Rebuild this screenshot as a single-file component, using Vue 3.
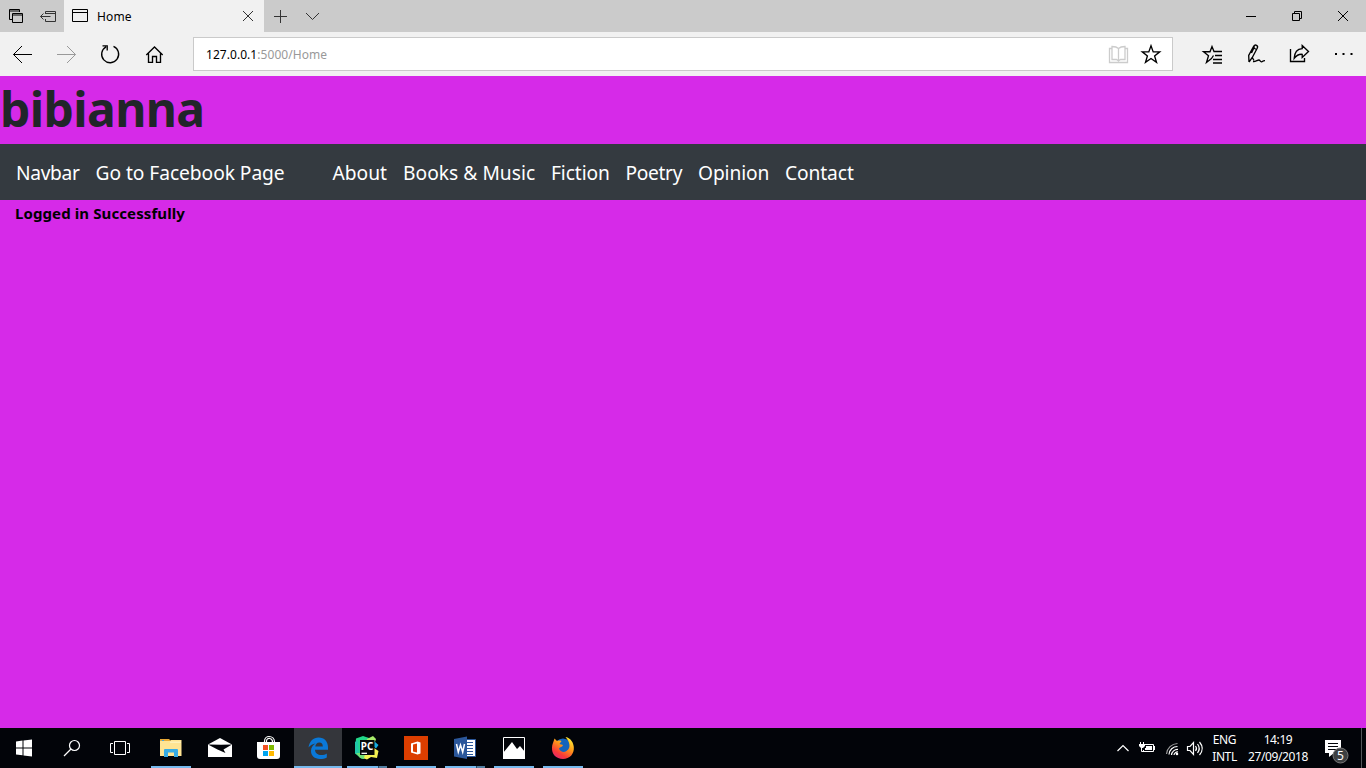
<script setup>
const links = [
  { label: 'Navbar', w: 79.5, s: -0.35 },
  { label: 'Go to Facebook Page', w: 237, s: -0.05 },
  { label: 'About', w: 70.5, s: 0 },
  { label: 'Books & Music', w: 148, s: 0.03 },
  { label: 'Fiction', w: 74.5, s: -0.1 },
  { label: 'Poetry', w: 72.5, s: -0.35 },
  { label: 'Opinion', w: 87, s: -0.1 },
  { label: 'Contact', w: 80, s: -0.1 }
]
</script>

<template>
  <div class="screen">
    <div class="tabs">
      <svg class="c32" viewBox="0 0 32 32"><path class="k" d="M9.5 19.500V9.500H19.500V12M9 11H20M12.500 22.500V13.500H22.500V22.500ZM12 15H23M9.500 19.500H12" /></svg>
      <svg class="c32" viewBox="32 0 32 32"><path class="k dim" d="M45.500 14V11.500H55.500V21.500H45.500V19M45 13.500H56M40.500 16.500H50.500M43.500 13.500L40.500 16.500L43.500 19.500" /></svg>
      <div class="tab">
        <svg class="c32" viewBox="64 0 32 32"><path class="k" d="M72.500 9.500H87.500V21.500H72.500ZM72 12.500H88" /></svg>
        <span class="tabname">Home</span>
        <svg class="c32" viewBox="232 0 32 32"><path class="k dim" d="M243 11L253 21M253 11L243 21" /></svg>
      </div>
      <svg class="c32" viewBox="264 0 32 32"><path class="k dim" d="M274 16.500H287M280.500 10V23" /></svg>
      <svg class="c32" viewBox="296 0 32 32"><path class="k dim" d="M306 13L312.500 19.500L319 13" /></svg>
      <div class="grow"></div>
      <svg class="c46" viewBox="1228 0 46 32"><path class="k" d="M1246 16.500H1256" /></svg>
      <svg class="c46" viewBox="1274 0 46 32"><path class="k" d="M1292.500 13.500H1299.500V20.500H1292.500ZM1294.500 13.500V11.500H1301.500V18.500H1299.500" /></svg>
      <svg class="c46" viewBox="1320 0 46 32"><path class="k" d="M1338 11L1348 21M1348 11L1338 21" /></svg>
    </div>

    <div class="tools">
      <svg class="c44" viewBox="0 32 44 44"><path class="k" d="M32 54.500H13.500M22 46L13.500 54.500L22 63" /></svg>
      <svg class="c44" viewBox="44 32 44 44"><path class="k pale" d="M57 54.500H75.500M67 46L75.500 54.500L67 63" /></svg>
      <svg class="c44" viewBox="88 32 44 44"><path class="k thick" d="M106 46.800A8.500 8.500 0 1 0 113.500 46.400M102.500 45.800H107.200V50.500" /></svg>
      <svg class="c44" viewBox="132 32 44 44"><path class="k thick" d="M146.300 55L154.500 47L162.700 55M148.500 53.500V62.400H152.500V56.500H156.500V62.400H160.500V53.500" /></svg>
      <div class="address">
        <span class="url">127.0.0.1<i>:5000/Home</i></span>
        <svg class="c32" viewBox="1103 38 32 32"><path class="book" d="M1118.500 61V48.500C1116.500 46.500 1113.500 46.500 1112 46.500V59.500H1116.500L1118.500 61L1120.500 59.500H1125V46.500C1122.500 46.500 1120.500 46.500 1118.500 48.500M1112 48.500H1109.500V62.500H1127.500V48.500H1125" /></svg>
        <svg class="c32" viewBox="1135 38 32 32"><path class="k thick" d="M1151 45.800L1153.200 51.900H1159.700L1154.600 56L1156.500 62.400L1151 58.500L1145.500 62.400L1147.400 56L1142.300 51.900H1148.800Z" /></svg>
      </div>
      <svg class="c44" viewBox="1190 32 44 44"><path class="k thick" d="M1222 51.500H1214L1212 46.500L1210 51.700H1203.500L1208.500 55.700L1206.500 62.500L1211.500 58.500M1215 55.500H1222M1213 59.500H1222M1213 63H1222M1211.500 58.500L1213.500 55.500" /></svg>
      <svg class="c44" viewBox="1234 32 44 44"><path class="k thick" d="M1249 62L1248.700 55.500L1253.800 46.200C1255.200 43.800 1258.600 45.600 1257.200 48.200L1252.300 57.500L1249 62M1252.300 57.500L1254 60.500M1253.500 48L1256.500 49.500M1251.500 53L1254.500 46.500M1253 61.500C1255.500 62 1257.500 59.800 1259 60C1260.500 60.300 1260 62 1261.500 61.800C1263 61.600 1262.500 60.600 1265 60.700" /></svg>
      <svg class="c44" viewBox="1278 32 44 44"><path class="k thick" d="M1290.500 49V61.500H1304.500V58M1302.200 45.500L1308.500 51.500L1302.200 57.500V54.300C1298 53.900 1296 56 1294.200 58.300C1294.500 53 1297 49.100 1302.200 48.700Z" /></svg>
      <svg class="c44" viewBox="1322 32 44 44"><path d="M1335 53h2v2h-2zM1342.500 53h2v2h-2zM1350.500 53h2v2h-2z" /></svg>
    </div>

    <main class="page">
      <h1>bibianna</h1>
      <nav><a v-for="l in links" :key="l.label" :style="{ width: l.w + 'px', letterSpacing: l.s + 'px' }">{{ l.label }}</a></nav>
      <p class="msg">Logged in Successfully</p>
    </main>

    <footer class="taskbar">
      <svg class="c48" viewBox="0 728 48 40"><path fill="#fff" d="M16 741.500L22.500 740.600V747.500H16ZM23.500 740.500L32 739.500V747.500H23.500ZM16 748.500H22.500V755.300L16 754.500ZM23.500 748.500H32V756.500L23.500 755.500Z" /></svg>
      <svg class="c48" viewBox="48 728 48 40"><g class="w"><circle cx="74.500" cy="745.500" r="5" /><path d="M71 749L64 756" /></g></svg>
      <svg class="c48" viewBox="96 728 48 40"><path class="w sharp" d="M114.500 741.500H125.500V754.500H114.500ZM113 743.500H110.500V752.500H113M127 743.500H129.500V752.500H127" /></svg>
      <div class="app first">
        <svg class="c48" viewBox="147 728 48 40"><path fill="#e8a936" d="M160 739H169L171 741H160Z" /><path fill="#ffe493" d="M160 741H170L171 740H181.500V756H160Z" /><path fill="#fff1b9" d="M170 741.500H181V743H170Z" /><path fill="#38ace4" d="M164 757V750Q164 749 165 749H177Q178 749 178 750V757H174V752.500H168V757Z" /><path fill="#45a5de" d="M162 740H164V741H162Z" /></svg>
        <b class="line"></b>
      </div>
      <div class="app"><svg class="c48" viewBox="196 728 48 40"><path fill="#fff" d="M208 744.500L220 738L232 744.500V757H208Z" /><path fill="#020409" d="M208 744.500L221 744.800L232 744.500L223.500 749.500L225.500 753L217.500 749.500Z" /></svg></div>
      <div class="app"><svg class="c48" viewBox="245 728 48 40"><path class="w" d="M264.500 743V741.500C264.500 738 267 736.500 269 736.500C272 736.500 274.500 738.500 274.500 742M266.500 742V741C266.500 739 268.500 738 270 738.500C272 739 272.500 741 272.500 742" /><path fill="#fff" d="M257 742H280V756Q280 759 277 759H260Q257 759 257 756Z" /><path fill="#f25022" d="M263 745h5v5h-5z" /><path fill="#7fba00" d="M269 745h5v5h-5z" /><path fill="#00a4ef" d="M263 751h5v5h-5z" /><path fill="#ffb900" d="M269 751h5v5h-5z" /></svg></div>
      <div class="app active"><svg class="c48" viewBox="294 728 48 40"><path fill="#0a78d7" d="M308.500 747.500C309.500 741 313.500 737.500 318.500 737.500C324.500 737.500 328 741.500 328 747.500V749.800H315C315.200 753.500 318 755 321.200 755C323.500 755 325.500 754.300 326.800 753.400V757.400C325 758.400 322.600 758.900 320 758.900C314.500 758.900 311 755.700 311 751C311 747.500 313 744.800 315.500 743.500C313 744 310.200 745.300 308.500 747.500ZM315.300 746.400H322.800C322.800 743.800 321.600 742.400 319.300 742.400C316.900 742.400 315.500 744.200 315.300 746.400Z" /></svg><b class="line wide"></b></div>
      <div class="app"><svg class="c48" viewBox="343 728 48 40"><path fill="#21d789" d="M356 738.500L363 736L369 738L370 757L362 759L355 753.500Z" /><path fill="#20c5a8" d="M355 742L358 740L359 756L355 753Z" /><path fill="#a8ec6b" d="M367 739L373 736L376 739L375 742H366Z" /><path fill="#17aee0" d="M374 741L378.500 745L376 748.500L373 746Z" /><path fill="#f4f251" d="M374 748L378.500 751L377 758L371 757L367 759.500L360 757V753H374Z" /><path fill="#72df75" d="M356 753H365L364 759L360 758Z" /><path fill="#080a0b" d="M360 740h14.500v15h-14.500z" /><path stroke="#fff" fill="none" stroke-width="1.300" d="M361.500 753.300H367" /><text x="360.800" y="749.500" fill="#fff" font-size="10" font-weight="700" textLength="12.500" lengthAdjust="spacingAndGlyphs">PC</text></svg><b class="line split"></b></div>
      <div class="app"><svg class="c48" viewBox="392 728 48 40"><path fill="#dc3e00" d="M404 736h24v24h-24z" /><path fill="#fff" fill-rule="evenodd" d="M411 743.500L417.500 741.500L420.500 742.500V753.500L417.500 754.500L411 752.500ZM413 744.500V751.500L417 752.500V743.500Z" /></svg><b class="line"></b></div>
      <div class="app"><svg class="c48" viewBox="441 728 48 40"><path fill="#fff" stroke="#2b579a" d="M465.500 739.500H475.500V756.500H465.500Z" /><path stroke="#2b579a" stroke-width="1" d="M466 742.500H473M466 745.500H473M466 748.500H473M466 751.500H473M466 754.500H473" /><path fill="#2b579a" d="M454 739L467 736.500V759L454 756.500Z" /><path fill="none" stroke="#fff" stroke-width="1.500" d="M456.500 744L458.300 752L460.500 745L462.700 752L464.500 744" /></svg><b class="line split"></b></div>
      <div class="app"><svg class="c48" viewBox="490 728 48 40"><path fill="#020409" stroke="#fff" d="M503.500 737.500H524.500V758.500H503.500Z" /><path fill="#fff" d="M503 753L512 742L517 749L520 746L525 752V759H503Z" /></svg><b class="line"></b></div>
      <div class="app"><svg class="c48" viewBox="539 728 48 40">
        <defs><linearGradient id="fx" x1=".8" y1="0" x2=".2" y2="1"><stop offset="0" stop-color="#fff23b" /><stop offset=".4" stop-color="#ff9b18" /><stop offset=".75" stop-color="#fa3b38" /><stop offset="1" stop-color="#e32573" /></linearGradient></defs>
        <circle cx="563" cy="747.500" r="9" fill="#1464bd" /><path fill="url(#fx)" d="M554.500 738.500L557 741C558.500 740.300 560 740.500 561.500 741L559.500 744L563 745C562.500 747 560 747 559 748.500C560 752 565 753 567 750.500C571 748 570 742 565.500 737C571 738 573.500 743 573.800 747C574.500 754 569.500 759 563 759C556 759 551.500 754 552 747.500C552 744.500 553.500 742 554.500 738.500Z" /></svg><b class="line"></b></div>
      <div class="grow"></div>
      <svg class="tray" viewBox="1110 728 98 40"><g class="w">
        <path d="M1117.500 751L1123 745.500L1128.500 751" />
        <path class="sharp" d="M1145 744.500H1153.500V751.500H1143.500V750" /><path fill="#fff" stroke="none" d="M1146 746H1152V750H1145V748H1146ZM1154 746H1155V750H1154ZM1139 744H1145V746L1143 748H1141L1139 746Z" /><path class="sharp" d="M1140.500 742V744M1143.500 742V744M1141.500 748V751.500H1144" />
        <path class="gray" d="M1166.500 754A11.500 11.500 0 0 1 1177.500 743.500" /><path d="M1169 754.500A8.500 8.500 0 0 1 1177.500 746.500M1171.500 755A6 6 0 0 1 1178 749.500M1174 755A3.500 3.500 0 0 1 1178 752" /><circle cx="1177" cy="754" r=".7" />
        <path d="M1187.500 746.500H1190L1193.500 742.500V754.500L1190 750.500H1187.500ZM1195.500 746Q1197.500 748.500 1195.500 751M1197.500 744Q1201 748.500 1197.500 753M1199.500 742Q1205 748.500 1199.500 755" />
      </g></svg>
      <div class="info lang"><span>ENG</span><span>INTL</span></div>
      <div class="info clock"><span class="time">14:19</span><span class="date">27/09/2018</span></div>
      <svg class="note" viewBox="1317 728 49 40"><path fill="#fff" d="M1325 740H1341V753H1334L1329 757V753H1325Z" /><path stroke="#020409" d="M1328 743.500H1338M1328 746.500H1338M1328 749.500H1338" /><circle cx="1340.500" cy="755.500" r="7.500" fill="#3d4042" stroke="#777" /><text x="1337" y="760" fill="#fff" font-size="12">5</text><path stroke="#53565a" d="M1361.500 728V768" /></svg>
    </footer>
  </div>
</template>

<style>
body { overflow: hidden; }
</style>
<style scoped>
.screen { width: 1366px; height: 768px; display: flex; flex-direction: column; font-family: "Noto Sans", "Open Sans", sans-serif; background: #d62ae8; overflow: hidden; }
svg { display: block; flex: none; }
.k { fill: none; stroke: #000; stroke-width: 1; }
.dim { stroke: #333; }
.pale { stroke: #999; }
.thick { stroke-width: 1.350; }
.book { fill: none; stroke: #ccc; stroke-width: 1.300; }
.w { fill: none; stroke: #fff; stroke-width: 1.200; }
.sharp { stroke-width: 1; }
.gray { stroke: #999; }
.c32 { width: 32px; height: 32px; }
.c46 { width: 46px; height: 32px; }
.c44 { width: 44px; height: 44px; }
.c48 { width: 48px; height: 40px; }
.grow { flex: 1; }
.tabs { height: 32px; display: flex; background: #cbcbcb; }
.tab { width: 200px; display: flex; background: #f1f1f1; }
.tabname { flex: 1; padding-left: 1px; font-size: 12px; line-height: 33px; letter-spacing: 0.15px; }
.tools { height: 44px; display: flex; background: #f1f1f1; }
.address { box-sizing: border-box; width: 980px; height: 34px; margin: 5px 17px 0; border: 1px solid #cacaca; background: #fff; display: flex; padding-right: 5px; }
.url { flex: 1; padding-left: 12px; font-size: 12px; letter-spacing: 0.05px; line-height: 33px; color: #000; }
.url i { font-style: normal; color: #999; }
.page { flex: 1; }
h1 { margin: 0; height: 68px; font-size: 48px; line-height: 66px; font-weight: 700; letter-spacing: -0.6px; color: #212529; }
nav { height: 56px; box-sizing: border-box; padding-left: 16px; background: #343a40; display: flex; }
nav a { flex: none; white-space: nowrap; color: #fff; font-size: 19.200px; line-height: 57px; }
.msg { margin: 0; padding-left: 15px; color: #000; font-size: 15px; font-weight: 700; letter-spacing: 0.1px; line-height: 27px; }
.taskbar { height: 40px; display: flex; background: #020409; color: #fff; }
.app { width: 48px; height: 40px; margin-right: 1px; position: relative; }
.first { margin-left: 3px; }
.active { background: #34363b; }
.line { position: absolute; left: 4px; bottom: 0; width: 40px; height: 2px; background: #76b9ed; }
.wide { left: 0; width: 48px; }
.split { background: linear-gradient(90deg, #76b9ed 31px, #2d4b62 31px, #2d4b62 32px, #527fa2 32px); }
.tray { width: 98px; height: 40px; }
.info { display: flex; flex-direction: column; align-items: center; padding-top: 3px; box-sizing: border-box; font-size: 12px; line-height: 17px; letter-spacing: -0.4px; }
.lang { width: 33px; }
.clock { width: 74px; margin-right: 2px; }
.note { width: 49px; height: 40px; }
</style>
